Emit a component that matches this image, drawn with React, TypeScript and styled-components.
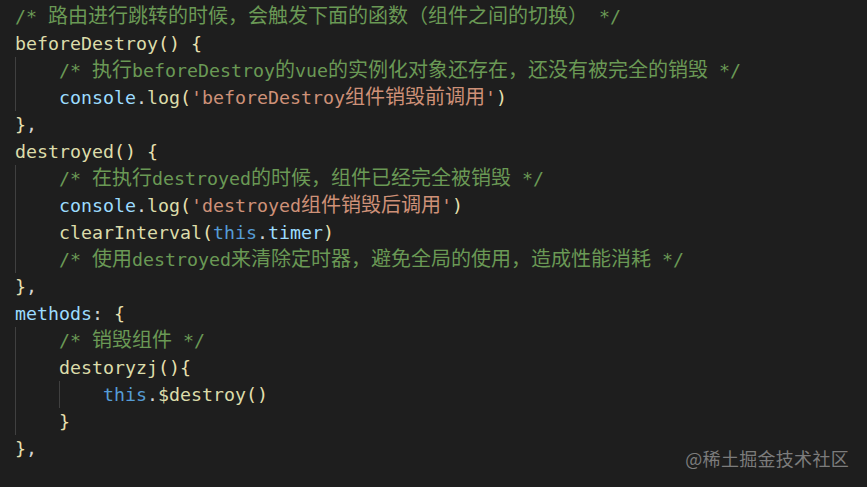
import React from "react";
import styled, { createGlobalStyle } from "styled-components";

const Global = createGlobalStyle`
  html, body { margin: 0; padding: 0; background: #1e1e1e; }
  #root { width: 867px; height: 487px; }
`;

const Editor = styled.div`
  position: relative;
  width: 867px;
  height: 487px;
  box-sizing: border-box;
  padding: 3px 0 0 15px;
  background: #1e1e1e;
  overflow: hidden;
  font-family: "DejaVu Sans Mono", "Liberation Mono", monospace;
  font-size: 18.27px;
  color: #d4d4d4;
`;

const Block = styled.div`
  border-left: 1px solid #404040;
  padding-left: 43px;
`;

const Line = styled.div`
  height: 27px;
  line-height: 27px;
  white-space: pre;
`;

const colors: Record<string, string> = {
  c: "#6a9955",
  f: "#dcdcaa",
  p: "#9cdcfe",
  s: "#ce9178",
  k: "#569cd6",
  t: "#d4d4d4",
  b: "#e8e0b0",
};

const Tok = styled.span<{ $kind: string }>`
  color: ${(p) => colors[p.$kind] || "#d4d4d4"};
`;

const Cjk = styled.span`
  font-family: "Noto Sans CJK SC", sans-serif;
  font-size: 20px;
  line-height: 1;
`;

const Watermark = styled.div`
  position: absolute;
  right: 18px;
  bottom: 16px;
  font-family: "Noto Sans CJK SC", sans-serif;
  font-size: 18px;
  letter-spacing: 0.3px;
  color: #7c7c7c;
`;

type T = [string, string];

function renderText(text: string) {
  const parts = text.split(/([\u3000-\u303f\u4e00-\u9fff\uff00-\uffef]+)/);
  return parts.map((part, i) =>
    i % 2 === 1 ? <Cjk key={i}>{part}</Cjk> : part
  );
}

const Code = ({ tokens }: { tokens: T[] }) => (
  <Line>
    {tokens.map(([k, t], i) => (
      <Tok key={i} $kind={k}>
        {renderText(t)}
      </Tok>
    ))}
  </Line>
);

export default function App() {
  return (
    <>
      <Global />
      <Editor>
        <Code tokens={[["c", "/* 路由进行跳转的时候，会触发下面的函数（组件之间的切换） */"]]} />
        <Code tokens={[["f", "beforeDestroy"], ["b", "() {"]]} />
        <Block>
          <Code tokens={[["c", "/* 执行beforeDestroy的vue的实例化对象还存在，还没有被完全的销毁 */"]]} />
          <Code
            tokens={[
              ["p", "console"],
              ["t", "."],
              ["f", "log"],
              ["b", "("],
              ["s", "'beforeDestroy组件销毁前调用'"],
              ["b", ")"],
            ]}
          />
        </Block>
        <Code tokens={[["b", "}"], ["t", ","]]} />
        <Code tokens={[["f", "destroyed"], ["b", "() {"]]} />
        <Block>
          <Code tokens={[["c", "/* 在执行destroyed的时候，组件已经完全被销毁 */"]]} />
          <Code
            tokens={[
              ["p", "console"],
              ["t", "."],
              ["f", "log"],
              ["b", "("],
              ["s", "'destroyed组件销毁后调用'"],
              ["b", ")"],
            ]}
          />
          <Code
            tokens={[
              ["f", "clearInterval"],
              ["b", "("],
              ["k", "this"],
              ["t", "."],
              ["p", "timer"],
              ["b", ")"],
            ]}
          />
          <Code tokens={[["c", "/* 使用destroyed来清除定时器，避免全局的使用，造成性能消耗 */"]]} />
        </Block>
        <Code tokens={[["b", "}"], ["t", ","]]} />
        <Code tokens={[["p", "methods"], ["t", ": "], ["b", "{"]]} />
        <Block>
          <Code tokens={[["c", "/* 销毁组件 */"]]} />
          <Code tokens={[["f", "destoryzj"], ["b", "(){"]]} />
          <Block>
            <Code tokens={[["k", "this"], ["t", "."], ["f", "$destroy"], ["b", "()"]]} />
          </Block>
          <Code tokens={[["b", "}"]]} />
        </Block>
        <Code tokens={[["b", "}"], ["t", ","]]} />
        <Watermark>@稀土掘金技术社区</Watermark>
      </Editor>
    </>
  );
}
